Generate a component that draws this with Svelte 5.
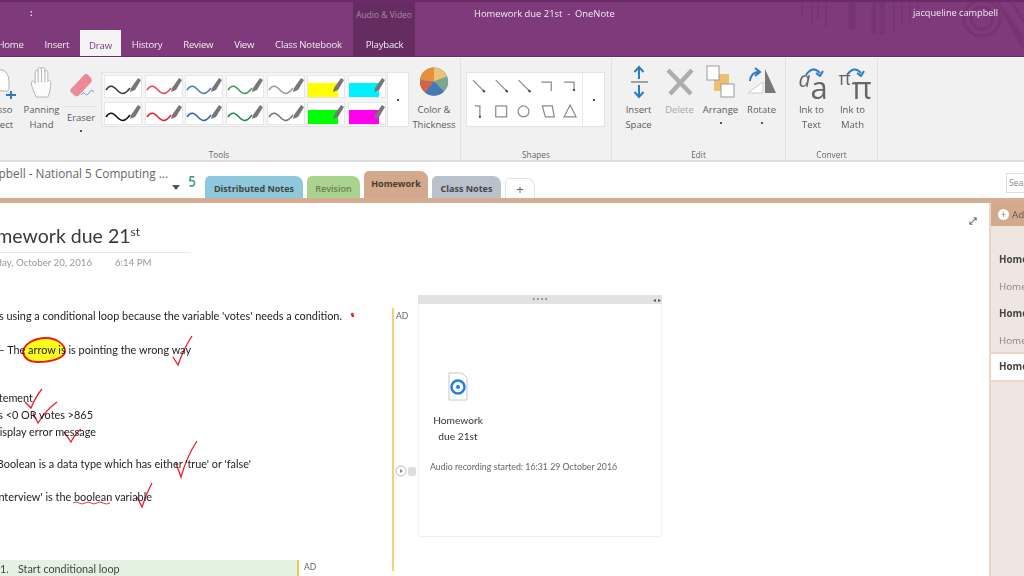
<script>
  const tabs = ['Home', 'Insert', 'Draw', 'History', 'Review', 'View', 'Class Notebook', 'Playback'];
  const pens = [
    ['#3a3a3a', ''], ['#e8474f', ''], ['#4a78c4', ''], ['#3f9a63', ''], ['#9a9a9a', ''], ['', '#ffff00'], ['', '#00f0ff'],
    ['#111', ''], ['#f01c2c', ''], ['#2f62c0', ''], ['#1f8a45', ''], ['#777', ''], ['', '#00ff00'], ['', '#ff00ee']
  ];
  const notes = [
    { t: "This is using a conditional loop because the variable 'votes' needs a condition.", y: 308, end: 342 },
    { t: '– The arrow is is pointing the wrong way', y: 342, end: 191 },
    { t: 'If statement', y: 390, end: 33 },
    { t: 'If votes <0 OR votes >865', y: 407, end: 93 },
    { t: 'Display error message', y: 424, end: 96 },
    { t: "A Boolean is a data type which has either 'true' or 'false'", y: 456, end: 251 },
    { t: "'interview' is the boolean variable", y: 489, end: 152 }
  ];
  const checks = [
    'M173 357 L178 365 Q184 348 192 336',
    'M25 402 L31 408 Q36 396 42 389',
    'M33 413 L38 423 Q46 410 57 402',
    'M64 432 L71 442 Q75 434 81 429',
    'M176 463 L181 477 Q187 456 197 441',
    'M137 497 L142 507 Q146 494 152 483'
  ];
  const pages = [
    { t: 'Homework', b: true }, { t: 'Homework', b: false }, { t: 'Homework', b: true }, { t: 'Homework', b: false }
  ];
</script>

<div class="page">
  <header class="titlebar">
    <svg class="deco" width="234" height="57" viewBox="0 0 234 57" fill="none">
      <g stroke="#6f2f6b" opacity=".45">
        <path stroke-width="2" d="M12 0V14M22 0V22M28 0V18M36 0V26"/>
        <path stroke-width="7" d="M62 0V28"/>
        <path stroke-width="5" d="M84 0V32M92 0V32"/>
        <path stroke-width="2" d="M104 0V30M112 0V24M120 0V20M128 0V14"/>
      </g>
      <g stroke="#6c2c68" stroke-width="3" opacity=".4">
        <circle cx="192" cy="16" r="11"/><circle cx="192" cy="16" r="18"/>
        <path d="M214 8L234 38M208 0L234 46M222 0L234 20"/>
      </g>
    </svg>
    <div class="context"><span>Audio &amp; Video</span></div>
    <div class="toprow">
      <span class="qat">:</span>
      <span class="doc">Homework due 21st &nbsp;-&nbsp; OneNote</span>
      <span class="user">jacqueline campbell</span>
    </div>
    <nav class="tabrow">
      {#each tabs as t}
        <span class="tab" class:active={t === 'Draw'}>{t}</span>
      {/each}
    </nav>
  </header>

  <section class="ribbon">
    <div class="group tools">
      <div class="grow">
        <div class="btn lasso">
          <svg width="40" height="35" viewBox="0 0 40 35" fill="none">
            <path d="M16 6C25 4 29 10 29 18S30 27 25 27 14 27 13 19 12 8 16 6Z" fill="#fff" stroke="#b0b0b0"/>
            <path d="M26 31H36M31 27V35" stroke="#2b7cc4" stroke-width="2"/>
          </svg>
          <span>Lasso<br />Select</span>
        </div>
        <div class="btn hand">
          <svg width="28" height="35" viewBox="0 0 28 36" fill="#fbfbfb" stroke="#b5b5b5">
            <path d="M8 34C6 28 3 24 3 19 3 17 6 17 7 20V8C7 6 10 6 10 8V5C10 3 13 3 13 5V5C13 3 17 3 17 5V8C17 6 20 6 20 8V18C21 16 23 17 23 19 23 25 22 30 20 34Z"/>
            <path d="M10 8V19M13.500 5V19M17 8V19"/>
          </svg>
          <span>Panning<br />Hand</span>
        </div>
        <div class="btn eraser">
          <svg width="26" height="27" viewBox="0 0 30 32">
            <path d="M3 20L18 4C20 2 22 2 24 4L27 7C28 9 28 10 27 12L12 28C11 29 9 29 8 28L3 24C2 23 2 21 3 20Z" fill="#ea8a97"/>
            <path d="M15 27Q18 23 20 26T25 24T30 24" stroke="#5c93c9" fill="none"/>
          </svg>
          <div class="rule"></div>
          <span>Eraser</span>
          <i class="dot"></i>
        </div>
        <div class="gallery pens">
          <div class="pengrid">
            {#each pens as p}
              <div class="swatch">
                {#if p[1]}<b class="marker" style:background={p[1]}></b>{/if}
                <svg width="38" height="23" viewBox="0 0 38 23" fill="none">
                  {#if p[0]}
                    <path d="M2 15C6 9 9 11 13 15S20 21 26 13" stroke={p[0]} stroke-width="1.600"/>
                  {/if}
                  <path d="M27 13L34 3 37 5 31 15 26 17Z" fill="#777"/>
                </svg>
              </div>
            {/each}
          </div>
          <div class="more"><i class="dot"></i></div>
        </div>
        <div class="btn colour">
          <svg width="30" height="32" viewBox="0 0 30 32">
            <circle cx="15" cy="16" r="14" fill="#5a9bd0"/>
            <path d="M15 16L15 2A14 14 0 0 1 28 11Z" fill="#eec177"/>
            <path d="M15 16L28 11A14 14 0 0 1 25 26Z" fill="#7ba78f"/>
            <path d="M15 16L6 27A14 14 0 0 1 1 15Z" fill="#d9613c"/>
            <path d="M15 16L1 14A14 14 0 0 1 15 2Z" fill="#e78f3a"/>
            <path d="M15 16L25 26A14 14 0 0 1 6 27Z" fill="#4379b5"/>
          </svg>
          <span>Color &amp;<br />Thickness</span>
        </div>
      </div>
      <div class="glabel">Tools</div>
    </div>

    <div class="group shapes">
      <div class="grow">
        <div class="gallery shapebox">
          <svg width="116" height="55" viewBox="0 0 116 55" fill="none" stroke="#888" stroke-width="1.200">
            <path d="M6 7L17 18M29 7L40 18 M52 7L63 18"/>
            <path d="M75 9H85V18M98 9H108V17"/>
            <path d="M8 33H13V44"/>
            <rect x="29" y="33" width="11" height="11"/>
            <circle cx="57" cy="38.500" r="5.500"/>
            <path d="M76 33H86L88 44H79Z"/>
            <path d="M104 32L110 44H98Z"/>
            <path d="M16 17L18 19M39 17L41 19M62 17L64 19M108 16V18M13 43V45" stroke="#444" stroke-width="2"/>
          </svg>
          <div class="more"><i class="dot"></i></div>
        </div>
      </div>
      <div class="glabel">Shapes</div>
    </div>

    <div class="group edit">
      <div class="grow">
        <div class="btn">
          <svg width="30" height="35" viewBox="0 0 30 35" fill="none">
            <path d="M15 3V15M10.500 8L15 3 19.500 8M15 21V33M10.500 28L15 33 19.500 28" stroke="#2b7cc4" stroke-width="2"/>
            <path d="M7 18H24" stroke="#888" stroke-width="1.500"/>
          </svg>
          <span>Insert<br />Space</span>
        </div>
        <div class="btn off">
          <svg width="30" height="35" viewBox="0 0 30 35" fill="none">
            <path d="M3 6L26 30M27 6L5 30" stroke="#adadad" stroke-width="4.500"/>
          </svg>
          <span>Delete</span>
        </div>
        <div class="btn">
          <svg width="30" height="35" viewBox="0 0 30 35">
            <rect x="8" y="10" width="15" height="17" fill="#edc06e"/>
            <rect x="1" y="2" width="12" height="14" fill="#fff" stroke="#999"/>
            <rect x="15" y="20" width="13" height="13" fill="#fff" stroke="#999"/>
          </svg>
          <span>Arrange</span>
          <i class="dot"></i>
        </div>
        <div class="btn">
          <svg width="30" height="35" viewBox="0 0 30 35" fill="none">
            <path d="M1 29L16 18V29Z" fill="#fff" stroke="#ccc"/>
            <path d="M18 5L29 29H18Z" fill="#777"/>
            <path d="M3 17Q4 8 12 8M8 4L13 8 8 12" stroke="#2b7cc4" stroke-width="2"/>
          </svg>
          <span>Rotate</span>
          <i class="dot"></i>
        </div>
      </div>
      <div class="glabel">Edit</div>
    </div>

    <div class="group convert">
      <div class="grow">
        <div class="btn">
          <div class="glyphs">
            <em class="small">a</em><em class="big">a</em>
            <svg width="26" height="12" viewBox="0 0 26 12" fill="none">
              <path d="M6 10Q13 0 20 8M16 8L20 11 23 6" stroke="#2b7cc4" stroke-width="2"/>
            </svg>
          </div>
          <span>Ink to<br />Text</span>
        </div>
        <div class="btn">
          <div class="glyphs">
            <em class="small pi">π</em><em class="big pi">π</em>
            <svg width="26" height="12" viewBox="0 0 26 12" fill="none">
              <path d="M6 10Q13 0 20 8M16 8L20 11 23 6" stroke="#2b7cc4" stroke-width="2"/>
            </svg>
          </div>
          <span>Ink to<br />Math</span>
        </div>
      </div>
      <div class="glabel">Convert</div>
    </div>
  </section>

  <section class="sectionbar">
    <div class="notebook">
      <span class="nbname">Jacqueline Campbell - National 5 Computing ...</span>
      <i class="caret"></i>
      <svg class="back" width="8" height="13" viewBox="0 0 10 16" fill="none">
        <path d="M8 2H3L2.500 7C7 6 9 8 8 11 7 14 4 14 2 13" stroke="#3f9a7f" stroke-width="2"/>
      </svg>
    </div>
    <div class="sections">
      <span class="sec blue">Distributed Notes</span>
      <span class="sec green">Revision</span>
      <span class="sec tan">Homework</span>
      <span class="sec grey">Class Notes</span>
      <span class="sec plus">+</span>
    </div>
    <div class="search">Search</div>
  </section>

  <main class="workspace">
    <div class="canvas">
      <svg class="expand" width="8" height="8" viewBox="0 0 10 10" fill="none">
        <path d="M1 9L9 1M5.500 1H9V4.500M1 5.500V9H4.500" stroke="#777" stroke-width="1.300"/>
      </svg>
      <h1 class="ntitle"><span>Homework due 21<sup>st</sup></span></h1>
      <div class="nline"></div>
      <div class="ndate"><span>Thursday, October 20, 2016</span></div>
      <div class="ntime">6:14 PM</div>

      {#each notes as n}
        <div class="note" style:top="{n.y}px" style:width="{n.end}px"><span>{n.t}</span></div>
      {/each}

      <div class="greenrow"><span class="num">1.</span><span>Start conditional loop</span></div>
      <div class="ad ad2">AD</div>

      <div class="audioline"></div>
      <div class="ad ad1">AD</div>

      <div class="playback">
        <svg width="24" height="12" viewBox="0 0 24 12">
          <circle cx="6" cy="6" r="5" fill="#fff" stroke="#bbb"/>
          <path d="M5 4L8 6 5 8Z" fill="#888"/>
          <rect x="13" y="2" width="8" height="9" rx="2" fill="#ddd"/>
        </svg>
      </div>

      <div class="embed">
        <div class="handle"><i>• • • •</i><b>◂ ▸</b></div>
        <div class="filetile">
          <svg width="22" height="30" viewBox="0 0 22 30">
            <path d="M2 1H15L20 6V28H2Z" fill="#fff" stroke="#c9c9c9"/>
            <circle cx="11" cy="15" r="6.500" fill="none" stroke="#1f7fe0" stroke-width="2.500"/>
            <circle cx="11" cy="15" r="2" fill="#1f7fe0"/>
          </svg>
          <span>Homework<br />due 21st</span>
        </div>
        <p class="recorded">Audio recording started: 16:31 29 October 2016</p>
      </div>

      <svg class="ink" width="420" height="240" viewBox="0 300 420 240" fill="none">
        <path d="M23 352C24 344 34 338 46 338 56 338 65 344 65 351 65 358 52 362 38 362 29 362 24 358 23 352Z" fill="#ffff1e" stroke="#f01818" stroke-width="1.800"/>
        <path d="M352 313L353 317" stroke="#f01818" stroke-width="2.500"/>
        {#each checks as d}
          <path {d} stroke="#ee1c25" stroke-width="1.300"/>
        {/each}
        <path d="M73 503Q76 501 79 503T85 503 91 503 97 503 103 503 110 503" stroke="#e04040"/>
      </svg>
    </div>

    <aside class="pagelist">
      <div class="addpage"><i>+</i><span>Add Page</span></div>
      <ul>
        {#each pages as p}
          <li class:strong={p.b}>{p.t}</li>
        {/each}
      </ul>
      <div class="current">Homework</div>
      <div class="rest"></div>
    </aside>
  </main>
</div>

<style>
  :global(body) { margin: 0; background: #fff; }
  * { box-sizing: border-box; }
  .page {
    width: 1024px; height: 576px; overflow: hidden;
    display: flex; flex-direction: column;
    font-family: "Open Sans", "Noto Sans", sans-serif;
    color: #555;
    filter: blur(0.35px);
  }

  /* title bar */
  .titlebar {
    position: relative; height: 57px; flex: none;
    background: #7e3a7a; border-top: 2px solid #6b2a68; border-bottom: 1px solid #6a2c67;
    color: #f4eaf3; overflow: hidden;
  }
  .context {
    position: absolute; left: 353px; top: -2px; width: 62px; height: 58px;
    background: #642c60; text-align: center; font-size: 8.500px; color: #a888a6; padding-top: 9px;
    white-space: nowrap;
  }
  .context span { display: block; margin: 0 -4px; }
  .toprow { position: relative; height: 28px; }
  .qat { position: absolute; left: 30px; top: 4px; font-weight: 700; font-size: 9px; }
  .doc { position: absolute; left: 474px; top: 5px; white-space: nowrap; font-size: 9.400px; }
  .user { position: absolute; left: 913px; top: 4px; white-space: nowrap; font-size: 9.200px; }
  .deco { position: absolute; left: 790px; top: 0; pointer-events: none; }
  .tabrow { position: relative; display: flex; margin-left: -13px; height: 27px; font-size: 9.600px; letter-spacing: -0.2px; }
  .tab { padding: 8px 10.400px 0; white-space: nowrap; }
  .tab:last-child { margin-left: 3px; }
  .tab.active { background: #f3f3f3; color: #7e3a7a; height: 28px; border-top: 1px solid #fff; padding-left: 9.500px; padding-right: 9.500px; }

  /* ribbon */
  .ribbon {
    height: 105px; flex: none; display: flex;
    background: #f1f1f1; border-bottom: 2px solid #dcdcdc; border-top: 1px solid #fbfbfb;
    padding-right: 146px;
  }
  .group { display: flex; flex-direction: column; border-right: 1px solid #e0e0e0; flex: none; }
  .tools { margin-left: -22px; width: 483px; }
  .shapes { width: 151px; }
  .edit { width: 174px; }
  .convert { width: 92px; }
  .grow { flex: 1; display: flex; align-items: flex-start; min-height: 0; }
  .glabel { text-align: center; font-size: 8.300px; height: 12px; line-height: 14px; color: #666; }
  .btn {
    width: 41px; flex: none; display: flex; flex-direction: column; align-items: center;
    padding-top: 6px; font-size: 9.500px; line-height: 15px; text-align: center; color: #5a5a5a;
  }
  .btn > svg { height: 35px; margin-bottom: 3px; flex: none; }
  .btn span { white-space: nowrap; }
  .btn.off span { color: #a9a9a9; }
  .dot { width: 2px; height: 2px; background: #555; display: block; margin-top: 5px; }
  .lasso { width: 44px; }
  .hand { width: 39px; }
  .eraser { width: 40px; }
  .btn.eraser > svg { height: 27px; margin: 8px 0 0; }
  .rule { width: 32px; height: 1px; background: #e0e0e0; margin: 7px 0 3px; }
  .colour { width: 48px; margin-left: 1px; }
  .gallery { display: flex; background: #fff; border: 1px solid #e4e4e4; margin-top: 14px; height: 55px; }
  .pens { width: 308px; }
  .pengrid { width: 286px; display: grid; grid-template-columns: repeat(7, 38px); gap: 4px 2.700px; padding: 2px 2px; background: #f5f5f5; border-right: 1px solid #e4e4e4; }
  .swatch { position: relative; width: 38px; height: 23px; background: #fff; border: 1px solid #e6e6e6; overflow: hidden; }
  .swatch svg { position: absolute; left: -1px; top: -1px; }
  .marker { position: absolute; left: 0; bottom: 0; width: 30px; height: 14px; }
  .more { flex: 1; display: flex; align-items: center; justify-content: center; }
  .more .dot { margin: 0; }
  .shapes .grow { padding-left: 5px; }
  .shapebox { width: 139px; }
  .shapebox svg { border-right: 1px solid #e8e8e8; }
  .edit .grow { padding-left: 6px; }
  .convert .grow { padding-left: 5px; }
  .glyphs { position: relative; width: 34px; height: 35px; margin-bottom: 3px; }
  .glyphs svg { position: absolute; left: 5px; top: 1px; }
  .glyphs em { position: absolute; color: #666; font-family: "Open Sans", sans-serif; }
  .glyphs .small { left: 4px; top: 7px; font-size: 21px; line-height: 16px; font-style: italic; }
  .glyphs .small.pi { left: 3px; top: 6px; font-style: normal; font-size: 19px; }
  .glyphs .big { left: 16px; top: 10px; font-style: normal; font-size: 31px; line-height: 26px; }

  /* section tabs */
  .sectionbar { position: relative; height: 36px; flex: none; display: flex; background: #fff; align-items: flex-end; }
  .notebook { width: 205px; height: 36px; flex: none; position: relative; }
  .nbname { position: absolute; right: 37px; top: 3px; font-size: 11.800px; color: #666; white-space: nowrap; }
  .caret { position: absolute; left: 172px; top: 23px; border: 4px solid transparent; border-top: 5px solid #555; border-bottom: 0; }
  .back { position: absolute; left: 188px; top: 13px; }
  .sections { display: flex; align-items: flex-end; gap: 4px; height: 36px; font-size: 9px; font-weight: 700; }
  .sec { height: 22px; display: flex; align-items: center; justify-content: center; padding-top: 2px; border-radius: 5px 8px 0 0; color: #444; white-space: nowrap; }
  .blue { background: #8ec8dc; width: 98px; }
  .green { background: #a9d38e; width: 53px; color: #6d7e5a; font-weight: 600; }
  .tan { background: #d2a98c; width: 64px; height: 27px; color: #4a3a30; padding: 0 0 2px; }
  .grey { background: #b9c1cb; width: 69px; height: 22px; }
  .plus { width: 30px; height: 20px; background: #fff; border: 1px solid #e0e0e0; border-bottom: 0; font-weight: 400; color: #666; font-size: 13px; padding: 0; }
  .search { position: absolute; left: 1006px; top: 11px; width: 40px; height: 20px; border: 1px solid #ddd; font-size: 8.500px; line-height: 18px; padding-left: 2px; color: #888; }

  /* workspace */
  .workspace { flex: 1; display: flex; border-top: 5px solid #d6ad92; min-height: 0; }
  .canvas { position: relative; width: 989px; flex: none; background: #fff; font-family: Lato, "Open Sans", sans-serif; margin-top: -203px; overflow: hidden; clip-path: inset(203px 0 0 0); }
  .expand { position: absolute; left: 969px; top: 217px; }
  .ntitle { position: absolute; left: 0; top: 223px; width: 140px; margin: 0; display: flex; justify-content: flex-end; font-weight: 400; font-size: 19.500px; line-height: 26px; color: #3a3a3a; white-space: nowrap; }
  .ntitle sup { font-size: 12px; line-height: 0; }
  .nline { position: absolute; left: 0; top: 252px; width: 191px; height: 1px; background: #e8e8e8; }
  .ndate { position: absolute; left: 0; top: 255px; width: 92px; display: flex; justify-content: flex-end; font-size: 9.700px; line-height: 14px; color: #999; white-space: nowrap; }
  .ntime { position: absolute; left: 115px; top: 255px; font-size: 9.700px; line-height: 14px; color: #999; }
  .note { position: absolute; left: 0; display: flex; justify-content: flex-end; font-size: 10.880px; line-height: 16px; color: #222; white-space: nowrap; }
  .greenrow { position: absolute; left: 0; top: 560px; width: 297px; height: 16px; background: #e4f2e2; font-size: 10.800px; line-height: 18px; color: #444; display: flex; white-space: nowrap; }
  .num { width: 18px; }
  .ad { position: absolute; font-size: 8.500px; line-height: 10px; color: #666; }
  .ad1 { left: 396px; top: 311px; }
  .ad2 { left: 304px; top: 562px; }
  .greenrow::after { content: ""; position: absolute; left: 297px; top: 0; width: 2px; height: 16px; background: #f2c65a; }
  .audioline { position: absolute; left: 392px; top: 308px; width: 2px; height: 263px; background: #f5cf7c; }
  .playback { position: absolute; left: 395px; top: 461px; }
  .embed { position: absolute; left: 418px; top: 295px; width: 244px; height: 242px; border: 1px solid #f0f0f0; border-top: 0; background: #fff; }
  .handle { height: 9px; background: #e2e2e2; position: relative; margin: 0 -1px; text-align: center; font-size: 5px; line-height: 9px; color: #888; }
  .handle i { font-style: normal; }
  .handle b { position: absolute; right: 1px; top: 0; font-weight: 400; font-size: 6px; color: #555; }
  .filetile { position: absolute; left: 0; top: 77px; width: 78px; display: flex; flex-direction: column; align-items: center; font-size: 10.200px; line-height: 16px; color: #333; text-align: center; }
  .filetile svg { margin-bottom: 10px; }
  .recorded { position: absolute; left: 11px; top: 165px; margin: 0; font-size: 8.800px; line-height: 14px; color: #666; white-space: nowrap; }
  .ink { position: absolute; left: 0; top: 300px; pointer-events: none; mix-blend-mode: multiply; }

  /* page list */
  .pagelist { width: 35px; flex: none; display: flex; flex-direction: column; background: #efe6e1; border-left: 2px solid #ecd5c7; overflow: hidden; white-space: nowrap; font-size: 9.800px; }
  .addpage { height: 23px; flex: none; background: #d2a98c; margin-left: -2px; display: flex; align-items: center; gap: 3px; padding-left: 9px; color: #6a5648; }
  .addpage i { width: 11px; height: 11px; border-radius: 50%; background: #fff; color: #9a7a64; font-style: normal; font-size: 10px; line-height: 10px; text-align: center; flex: none; }
  ul { list-style: none; margin: 0; padding: 23px 0 0 8px; height: 128px; flex: none; border-bottom: 2px solid #ecd5c7; }
  li { height: 27px; line-height: 22px; color: #888; }
  li.strong { font-weight: 700; color: #444; }
  .current { height: 26px; flex: none; background: #fff; margin-left: -2px; padding-left: 10px; line-height: 26px; font-weight: 700; color: #444; }
  .rest { flex: 1; border-top: 2px solid #ecd5c7; }
</style>
